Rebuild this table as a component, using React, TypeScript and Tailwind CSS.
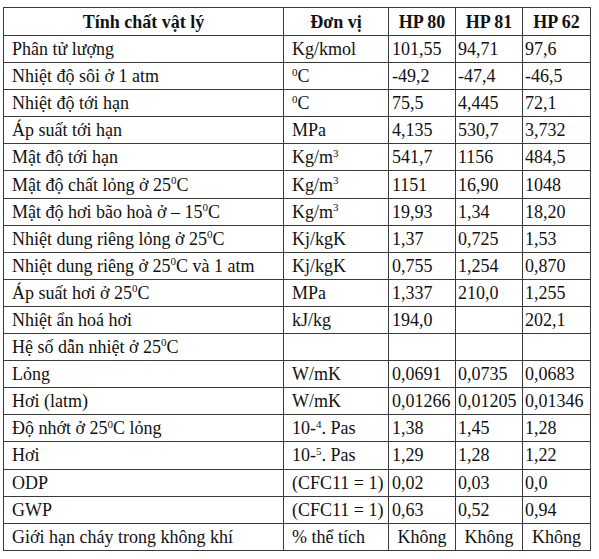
const rows: [React.ReactNode, React.ReactNode, string, string, string][] = [
  ["Phân tử lượng", "Kg/kmol", "101,55", "94,71", "97,6"],
  ["Nhiệt độ sôi ở 1 atm", <><sup>0</sup>C</>, "-49,2", "-47,4", "-46,5"],
  ["Nhiệt độ tới hạn", <><sup>0</sup>C</>, "75,5", "4,445", "72,1"],
  ["Áp suất tới hạn", "MPa", "4,135", "530,7", "3,732"],
  ["Mật độ tới hạn", <>Kg/m<sup>3</sup></>, "541,7", "1156", "484,5"],
  [<>Mật độ chất lỏng ở 25<sup>0</sup>C</>, <>Kg/m<sup>3</sup></>, "1151", "16,90", "1048"],
  [<>Mật độ hơi bão hoà ở – 15<sup>0</sup>C</>, <>Kg/m<sup>3</sup></>, "19,93", "1,34", "18,20"],
  [<>Nhiệt dung riêng lỏng ở 25<sup>0</sup>C</>, "Kj/kgK", "1,37", "0,725", "1,53"],
  [<>Nhiệt dung riêng ở 25<sup>0</sup>C và 1 atm</>, "Kj/kgK", "0,755", "1,254", "0,870"],
  [<>Áp suất hơi ở 25<sup>0</sup>C</>, "MPa", "1,337", "210,0", "1,255"],
  ["Nhiệt ẩn hoá hơi", "kJ/kg", "194,0", "", "202,1"],
  [<>Hệ số dẫn nhiệt ở 25<sup>0</sup>C</>, "", "", "", ""],
  ["Lỏng", "W/mK", "0,0691", "0,0735", "0,0683"],
  ["Hơi (latm)", "W/mK", "0,01266", "0,01205", "0,01346"],
  [<>Độ nhớt ở 25<sup>0</sup>C lỏng</>, <>10-<sup>4</sup>. Pas</>, "1,38", "1,45", "1,28"],
  ["Hơi", <>10-<sup>5</sup>. Pas</>, "1,29", "1,28", "1,22"],
  ["ODP", "(CFC11 = 1)", "0,02", "0,03", "0,0"],
  ["GWP", "(CFC11 = 1)", "0,63", "0,52", "0,94"],
];

const cell = "border border-[#3a3a3a] h-[27.1px] p-0 align-middle leading-none whitespace-nowrap";

export default function App() {
  return (
    <div className="bg-white w-[599px] h-[559px] pt-[7px] pl-[3px] text-[#111] font-['Liberation_Serif',serif] text-[18px] [&_sup]:text-[11px] [&_sup]:top-[-0.6em]">
      <table className="border-collapse table-fixed w-[587px]">
        <colgroup>
          <col className="w-[280px]" />
          <col className="w-[105px]" />
          <col className="w-[67px]" />
          <col className="w-[67px]" />
          <col className="w-[68px]" />
        </colgroup>
        <thead>
          <tr className="font-bold">
            <th className={`${cell} h-[28px] text-center`}>Tính chất vật lý</th>
            <th className={`${cell} h-[28px] text-center`}>Đơn vị</th>
            <th className={`${cell} h-[28px] text-center`}>HP 80</th>
            <th className={`${cell} h-[28px] text-center`}>HP 81</th>
            <th className={`${cell} h-[28px] text-center`}>HP 62</th>
          </tr>
        </thead>
        <tbody>
          {rows.map((r, i) => (
            <tr key={i}>
              <td className={`${cell} pl-[8px]`}>{r[0]}</td>
              <td className={`${cell} pl-[8px]`}>{r[1]}</td>
              <td className={`${cell} pl-[3px]`}>{r[2]}</td>
              <td className={`${cell} pl-[2px]`}>{r[3]}</td>
              <td className={`${cell} pl-[2px]`}>{r[4]}</td>
            </tr>
          ))}
          <tr>
            <td className={`${cell} pl-[8px]`}>Giới hạn cháy trong không khí</td>
            <td className={`${cell} pl-[8px]`}>% thể tích</td>
            <td className={`${cell} text-center`}>Không</td>
            <td className={`${cell} text-center`}>Không</td>
            <td className={`${cell} text-center`}>Không</td>
          </tr>
        </tbody>
      </table>
    </div>
  );
}
